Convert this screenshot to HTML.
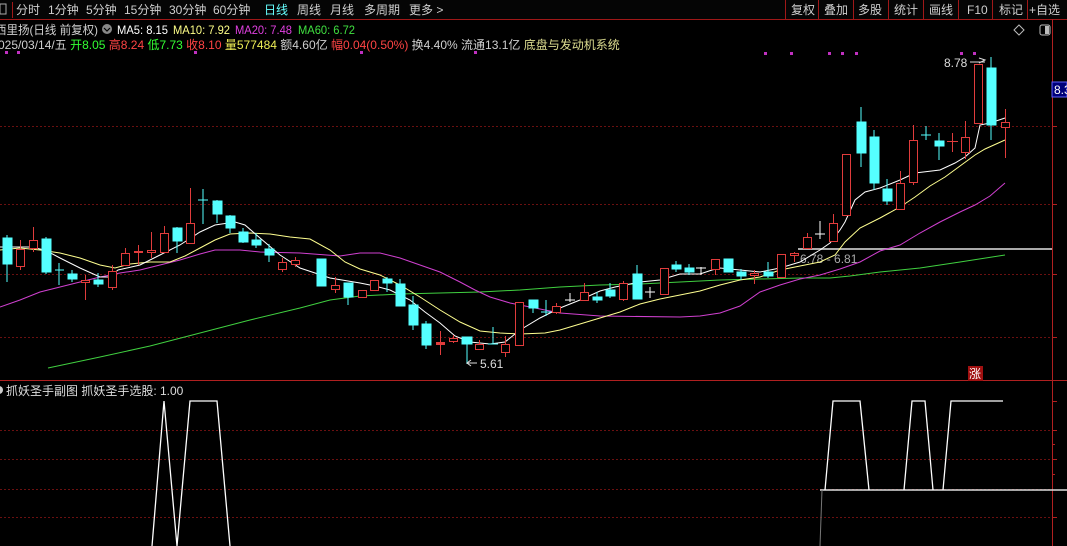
<!DOCTYPE html>
<html><head><meta charset="utf-8">
<style>
html,body{margin:0;padding:0;background:#000;width:1067px;height:546px;overflow:hidden}
svg{display:block}
text{font-family:"Liberation Sans","Noto Sans CJK SC",sans-serif;font-size:12px}
</style></head><body>
<svg width="1067" height="546" viewBox="0 0 1067 546" xmlns="http://www.w3.org/2000/svg">
<rect width="1067" height="546" fill="#000"/>
<rect x="0" y="0" width="1067" height="19" fill="#050505"/>
<line x1="0" y1="19.5" x2="1067" y2="19.5" stroke="#a01818"/>
<rect x="0" y="4" width="6" height="10" fill="none" stroke="#aaa"/>
<line x1="12.5" y1="2" x2="12.5" y2="18" stroke="#a01818"/>
<g fill="#cfcfcf" style="font-size:12.5px">
<text x="16" y="14">分时</text><text x="48" y="14">1分钟</text><text x="86" y="14">5分钟</text><text x="124" y="14">15分钟</text><text x="169" y="14">30分钟</text><text x="213" y="14">60分钟</text>
<text x="264" y="14" fill="#6ff">日线</text><text x="297" y="14">周线</text><text x="330" y="14">月线</text><text x="364" y="14">多周期</text><text x="409" y="14">更多 &gt;</text>
<text x="791" y="14">复权</text><text x="824" y="14">叠加</text><text x="858" y="14">多股</text><text x="894" y="14">统计</text><text x="929" y="14">画线</text><text x="967" y="14">F10</text><text x="999" y="14">标记</text><text x="1029" y="14">+自选</text>
</g>
<g stroke="#a01818"><line x1="785.5" y1="0" x2="785.5" y2="19"/><line x1="818.5" y1="0" x2="818.5" y2="19"/><line x1="853.5" y1="0" x2="853.5" y2="19"/><line x1="888.5" y1="0" x2="888.5" y2="19"/><line x1="923.5" y1="0" x2="923.5" y2="19"/><line x1="958.5" y1="0" x2="958.5" y2="19"/><line x1="992.5" y1="0" x2="992.5" y2="19"/><line x1="1027.5" y1="0" x2="1027.5" y2="19"/></g>
<text x="-5" y="34" fill="#cfcfcf" textLength="103" lengthAdjust="spacingAndGlyphs">西里扬(日线 前复权)</text>
<circle cx="107" cy="29" r="5" fill="#888"/><path d="M104 28 l3 3 l3 -3" stroke="#000" fill="none" stroke-width="1.2"/>
<text x="117" y="34" fill="#fff" textLength="51" lengthAdjust="spacingAndGlyphs">MA5: 8.15</text>
<text x="173" y="34" fill="#ffff88" textLength="57" lengthAdjust="spacingAndGlyphs">MA10: 7.92</text>
<text x="235" y="34" fill="#e040e0" textLength="57" lengthAdjust="spacingAndGlyphs">MA20: 7.48</text>
<text x="298" y="34" fill="#40e040" textLength="57" lengthAdjust="spacingAndGlyphs">MA60: 6.72</text>
<text x="-2" y="49" fill="#cfcfcf">025/03/14/五 <tspan fill="#3f3">开8.05</tspan> <tspan fill="#f44">高8.24</tspan> <tspan fill="#3f3">低7.73</tspan> <tspan fill="#f44">收8.10</tspan> <tspan fill="#ee5">量577484</tspan> 额4.60亿 <tspan fill="#f44">幅0.04(0.50%)</tspan> 换4.40% 流通13.1亿 <tspan fill="#dddd90">底盘与发动机系统</tspan></text>
<g fill="#c030c0"><rect x="5" y="51" width="3" height="3"/><rect x="17" y="51" width="3" height="3"/><rect x="194" y="51" width="3" height="3"/><rect x="360" y="51" width="3" height="3"/><rect x="474" y="51" width="3" height="3"/><rect x="764" y="52" width="3" height="3"/><rect x="790" y="52" width="3" height="3"/><rect x="828" y="52" width="3" height="3"/><rect x="841" y="52" width="3" height="3"/><rect x="855" y="52" width="3" height="3"/><rect x="960" y="52" width="3" height="3"/><rect x="973" y="52" width="3" height="3"/></g>
<path d="M1019 25 l5 5 l-5 5 l-5 -5z" fill="none" stroke="#bbb"/>
<rect x="1040" y="25" width="10" height="10" rx="2" fill="none" stroke="#bbb"/><rect x="1045" y="26" width="4" height="8" fill="#bbb"/>
<line x1="1052.5" y1="19" x2="1052.5" y2="546" stroke="#b02020"/>
<rect x="1052" y="82" width="15" height="15" fill="#00007a" stroke="#6060ff"/>
<text x="1054" y="94" fill="#fff">8.3</text>
<g stroke="#6a1010" stroke-dasharray="2,2">
<line x1="0" y1="126.5" x2="1052" y2="126.5"/><line x1="0" y1="204.5" x2="1052" y2="204.5"/><line x1="0" y1="274.5" x2="1052" y2="274.5"/><line x1="0" y1="337.5" x2="1052" y2="337.5"/>
<line x1="0" y1="430.5" x2="1052" y2="430.5"/><line x1="0" y1="459.5" x2="1052" y2="459.5"/><line x1="0" y1="489.5" x2="1052" y2="489.5"/><line x1="0" y1="517.5" x2="1052" y2="517.5"/>
</g>
<g stroke="#b02020"><line x1="1052" y1="126.5" x2="1057" y2="126.5"/><line x1="1052" y1="204.5" x2="1057" y2="204.5"/><line x1="1052" y1="274.5" x2="1057" y2="274.5"/><line x1="1052" y1="337.5" x2="1057" y2="337.5"/><line x1="1052" y1="401.5" x2="1057" y2="401.5"/><line x1="1052" y1="430.5" x2="1057" y2="430.5"/><line x1="1052" y1="444.5" x2="1055" y2="444.5"/><line x1="1052" y1="459.5" x2="1057" y2="459.5"/><line x1="1052" y1="474.5" x2="1055" y2="474.5"/><line x1="1052" y1="517.5" x2="1057" y2="517.5"/></g>
<line x1="0" y1="380.5" x2="1067" y2="380.5" stroke="#b02020"/>
<line x1="798" y1="249" x2="1052" y2="249" stroke="#aaa" stroke-width="2"/>
<text x="800" y="263" fill="#aaa">6.78 - 6.81</text>
<polyline fill="none" stroke="#40d040" points="48,368 100,357 150,346 200,333 250,320 300,308 330,300 360,296 400,294 440,293 480,292 520,290 560,287 600,285 640,284 680,282 720,280 760,279 800,278 830,278 850,276 880,272 920,268 960,262 1005,255"/>
<polyline fill="none" stroke="#d040d0" points="0,307 20,300 40,292 60,287 80,282 100,277 120,273 140,270 160,265 180,260 200,254 215,250 240,250 260,252 300,253 340,256 360,253 380,253 400,258 420,265 440,272 460,282 475,290 490,297 510,303 530,307 560,313 600,316 680,317 700,316 720,313 740,306 760,292 780,285 800,279 820,275 840,269 860,262 880,251 900,245 920,233 940,222 960,212 975,205 990,196 1005,183"/>
<polyline fill="none" stroke="#ffff90" points="0,250 20,248 40,250 60,253 80,258 100,265 115,268 130,264 150,262 170,262 185,256 200,248 215,240 230,234 250,233 270,234 290,237 310,239 330,250 345,262 360,269 380,275 400,285 420,297 440,310 460,322 480,331 500,333 520,334 545,333 560,330 580,324 600,318 620,312 640,304 660,299 680,295 700,291 720,285 740,280 760,277 780,270 800,266 820,262 835,255 845,242 860,228 880,218 900,207 915,197 930,186 945,177 960,166 975,155 985,149 1005,140"/>
<polyline fill="none" stroke="#fff" points="0,247 30,247 45,250 60,258 80,268 100,277 110,277 118,270 140,265 160,255 180,245 200,232 215,225 235,222 245,225 260,238 280,255 300,268 330,278 360,283 375,286 390,290 410,300 425,312 440,323 455,336 470,342 490,344 505,342 520,330 540,318 560,308 580,300 600,291 615,287 640,282 660,280 680,274 700,274 712,270 720,268 740,270 760,272 780,268 800,262 820,250 830,243 840,230 845,222 855,200 865,192 880,188 900,180 915,173 940,170 955,163 965,157 975,148 980,125 990,123 1005,118"/>
<g stroke="#5ff" fill="#5ff">
<line x1="7" y1="235" x2="7" y2="282"/><rect x="3" y="238" width="9" height="26"/>
<line x1="46" y1="237" x2="46" y2="274"/><rect x="42" y="239" width="9" height="33"/>
<line x1="59" y1="263" x2="59" y2="285"/><line x1="55" y1="270" x2="64" y2="270"/>
<line x1="72" y1="270" x2="72" y2="282"/><rect x="68" y="274" width="9" height="5"/>
<line x1="98" y1="273" x2="98" y2="287"/><rect x="94" y="280" width="9" height="4"/>
<line x1="177" y1="227" x2="177" y2="253"/><rect x="173" y="228" width="9" height="13"/>
<line x1="203" y1="189" x2="203" y2="224"/><line x1="198" y1="200" x2="208" y2="200"/>
<line x1="217" y1="200" x2="217" y2="223"/><rect x="213" y="201" width="9" height="13"/>
<line x1="230" y1="215" x2="230" y2="233"/><rect x="226" y="216" width="9" height="12"/>
<line x1="243" y1="228" x2="243" y2="243"/><rect x="239" y="232" width="9" height="10"/>
<line x1="256" y1="233" x2="256" y2="248"/><rect x="252" y="240" width="9" height="5"/>
<line x1="269" y1="244" x2="269" y2="262"/><rect x="265" y="249" width="9" height="6"/>
<rect x="317" y="259" width="9" height="27"/>
<line x1="348" y1="283" x2="348" y2="305"/><rect x="344" y="283" width="9" height="14"/>
<line x1="387" y1="277" x2="387" y2="292"/><rect x="383" y="279" width="9" height="4"/>
<line x1="400" y1="279" x2="400" y2="306"/><rect x="396" y="284" width="9" height="22"/>
<line x1="413" y1="296" x2="413" y2="330"/><rect x="409" y="305" width="9" height="20"/>
<line x1="426" y1="321" x2="426" y2="349"/><rect x="422" y="324" width="9" height="21"/>
<line x1="467" y1="338" x2="467" y2="364"/><rect x="462" y="337" width="10" height="7"/>
<line x1="493" y1="327" x2="493" y2="344"/><line x1="488" y1="344" x2="498" y2="344"/>
<line x1="533" y1="300" x2="533" y2="313"/><rect x="529" y="300" width="9" height="8"/>
<line x1="546" y1="300" x2="546" y2="316"/><line x1="541" y1="312" x2="551" y2="312"/>
<line x1="597" y1="292" x2="597" y2="303"/><rect x="593" y="297" width="9" height="3"/>
<line x1="610" y1="283" x2="610" y2="298"/><rect x="606" y="290" width="9" height="6"/>
<line x1="637" y1="265" x2="637" y2="299"/><rect x="633" y="274" width="9" height="25"/>
<line x1="676" y1="261" x2="676" y2="272"/><rect x="672" y="265" width="9" height="4"/>
<line x1="689" y1="264" x2="689" y2="275"/><rect x="685" y="268" width="9" height="4"/>
<rect x="724" y="259" width="9" height="13"/>
<line x1="741" y1="269" x2="741" y2="280"/><rect x="737" y="272" width="9" height="4"/>
<line x1="768" y1="262" x2="768" y2="278"/><rect x="764" y="272" width="9" height="4"/>
<line x1="861" y1="107" x2="861" y2="167"/><rect x="857" y="122" width="9" height="31"/>
<line x1="874" y1="130" x2="874" y2="190"/><rect x="870" y="137" width="9" height="46"/>
<line x1="887" y1="179" x2="887" y2="205"/><rect x="883" y="189" width="9" height="12"/>
<line x1="926" y1="126" x2="926" y2="140"/><line x1="921" y1="135" x2="931" y2="135"/>
<line x1="939" y1="133" x2="939" y2="160"/><rect x="935" y="141" width="9" height="5"/>
<line x1="991" y1="57" x2="991" y2="140"/><rect x="987" y="68" width="9" height="57"/>
</g>
<g stroke="#fff">
<line x1="570" y1="293" x2="570" y2="302"/><line x1="565" y1="300" x2="575" y2="300"/>
<line x1="650" y1="287" x2="650" y2="298"/><line x1="645" y1="292" x2="655" y2="292"/>
<line x1="701" y1="267" x2="701" y2="275"/><line x1="696" y1="268" x2="706" y2="268"/>
<line x1="820" y1="221" x2="820" y2="239"/><line x1="815" y1="234" x2="825" y2="234"/>
</g>
<g stroke="#e03c3c" fill="#000">
<line x1="20.5" y1="240" x2="20.5" y2="270"/><rect x="16.5" y="249.5" width="8" height="17"/>
<line x1="33.5" y1="227" x2="33.5" y2="252"/><rect x="29.5" y="240.5" width="8" height="8"/>
<line x1="85.5" y1="275" x2="85.5" y2="300"/><rect x="81.5" y="280.5" width="8" height="2"/>
<line x1="112.5" y1="265" x2="112.5" y2="290"/><rect x="108.5" y="271.5" width="8" height="16"/>
<line x1="125.5" y1="248" x2="125.5" y2="266"/><rect x="121.5" y="253.5" width="8" height="12"/>
<line x1="138.5" y1="245" x2="138.5" y2="265"/><rect x="134.5" y="251.5" width="8" height="1" fill="#e03c3c"/>
<line x1="151.5" y1="232" x2="151.5" y2="258"/><rect x="147.5" y="250.5" width="8" height="2"/>
<line x1="164.5" y1="226" x2="164.5" y2="253"/><rect x="160.5" y="233.5" width="8" height="19"/>
<line x1="190.5" y1="188" x2="190.5" y2="244"/><rect x="186.5" y="223.5" width="8" height="20"/>
<line x1="282.5" y1="258" x2="282.5" y2="272"/><rect x="278.5" y="262.5" width="8" height="7"/>
<line x1="295.5" y1="257" x2="295.5" y2="267"/><rect x="291.5" y="260.5" width="8" height="4"/>
<line x1="335.5" y1="277" x2="335.5" y2="293"/><rect x="331.5" y="285.5" width="8" height="4"/>
<rect x="358.5" y="290.5" width="8" height="7"/>
<rect x="370.5" y="280.5" width="8" height="10"/>
<line x1="440.5" y1="331" x2="440.5" y2="355"/><rect x="436.5" y="342.5" width="8" height="2" fill="#e03c3c"/>
<line x1="453.5" y1="335" x2="453.5" y2="343"/><rect x="449.5" y="338.5" width="8" height="3"/>
<line x1="479.5" y1="340" x2="479.5" y2="349"/><rect x="475.5" y="344.5" width="8" height="5"/>
<line x1="505.5" y1="336" x2="505.5" y2="357"/><rect x="501.5" y="344.5" width="8" height="8"/>
<rect x="515.5" y="302.5" width="8" height="43"/>
<line x1="556.5" y1="303" x2="556.5" y2="314"/><rect x="552.5" y="306.5" width="8" height="6"/>
<line x1="584.5" y1="283" x2="584.5" y2="301"/><rect x="580.5" y="292.5" width="8" height="8"/>
<line x1="623.5" y1="281" x2="623.5" y2="301"/><rect x="619.5" y="283.5" width="8" height="16"/>
<rect x="660.5" y="268.5" width="8" height="26"/>
<line x1="715.5" y1="259" x2="715.5" y2="275"/><rect x="711.5" y="259.5" width="8" height="10"/>
<line x1="754.5" y1="270" x2="754.5" y2="284"/><rect x="750.5" y="273.5" width="8" height="2"/>
<rect x="777.5" y="254.5" width="8" height="23"/>
<line x1="794.5" y1="252" x2="794.5" y2="262"/><rect x="790.5" y="253.5" width="8" height="2"/>
<line x1="807.5" y1="233" x2="807.5" y2="248"/><rect x="803.5" y="237.5" width="8" height="11"/>
<line x1="833.5" y1="214" x2="833.5" y2="241"/><rect x="829.5" y="223.5" width="8" height="18"/>
<rect x="842.5" y="154.5" width="8" height="61"/>
<line x1="900.5" y1="171" x2="900.5" y2="210"/><rect x="896.5" y="183.5" width="8" height="26"/>
<line x1="913.5" y1="125" x2="913.5" y2="185"/><rect x="909.5" y="140.5" width="8" height="42"/>
<line x1="952.5" y1="133" x2="952.5" y2="152"/><line x1="947" y1="141.5" x2="958" y2="141.5"/>
<line x1="965.5" y1="121" x2="965.5" y2="159"/><rect x="961.5" y="137.5" width="8" height="15"/>
<rect x="974.5" y="64.5" width="8" height="59"/>
<line x1="1005.5" y1="109" x2="1005.5" y2="158"/><rect x="1001.5" y="122.5" width="8" height="5"/>
</g>
<text x="944" y="67" fill="#ddd">8.78</text>
<path d="M970 62 h15 M979 58 l6 2 l-6 3" stroke="#ddd" fill="none"/>
<path d="M467 363 h10 M471 360 l-4 3 l4 3" stroke="#ddd" fill="none"/>
<text x="480" y="368" fill="#ddd">5.61</text>
<rect x="968" y="366" width="15" height="15" fill="#a01010"/>
<text x="969" y="378" fill="#fff">涨</text>
<circle cx="-1" cy="390" r="4" fill="#ccc"/>
<text x="6" y="395" fill="#ddd">抓妖圣手副图  抓妖圣手选股: 1.00</text>
<line x1="820" y1="490" x2="1067" y2="490" stroke="#ddd" stroke-width="1.5"/>
<path d="M822 490 L820 546" stroke="#777"/>
<polyline fill="none" stroke="#fff" stroke-width="1.3" points="152,546 164,401 177,546 190,401 217,401 230,546"/>
<polyline fill="none" stroke="#fff" stroke-width="1.3" points="825,490 833,401 860,401 869,490"/>
<polyline fill="none" stroke="#fff" stroke-width="1.3" points="904,490 912,401 925,401 933,490"/>
<polyline fill="none" stroke="#fff" stroke-width="1.3" points="943,490 951,401 1003,401"/>
</svg>
</body></html>
